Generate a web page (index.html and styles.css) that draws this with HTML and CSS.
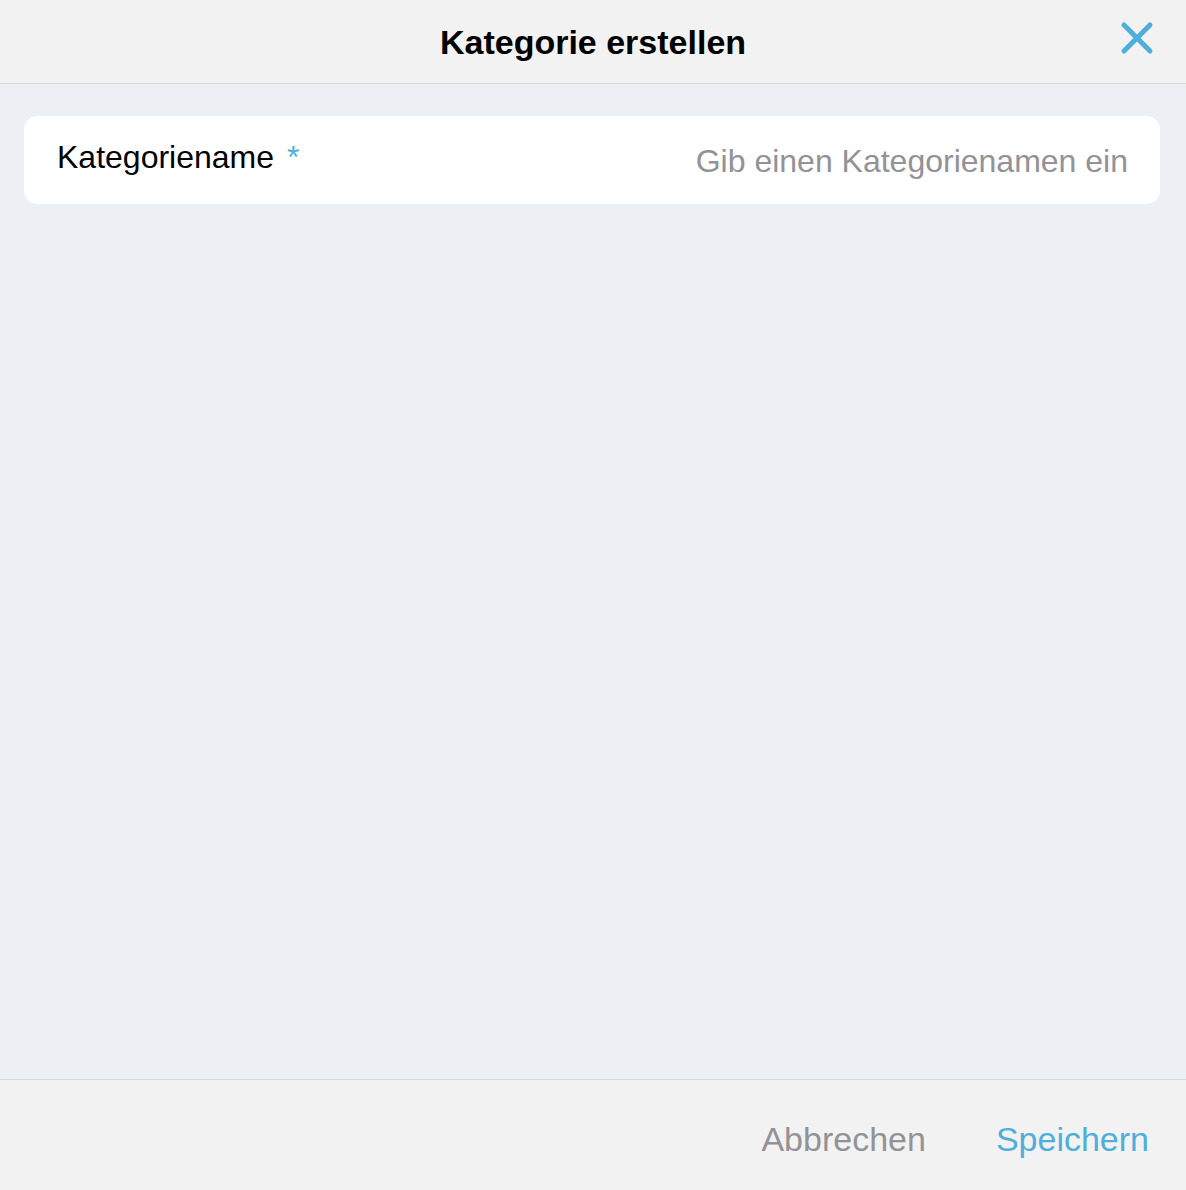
FILE: index.html
```html
<!DOCTYPE html>
<html lang="de">
<head>
<meta charset="utf-8">
<title>Kategorie erstellen</title>
<link rel="stylesheet" href="styles.css">
</head>
<body>
<div class="sheet">
  <header class="header">
    <h1 class="title">Kategorie erstellen</h1>
    <button class="close" aria-label="Schließen">
      <svg width="34" height="34" viewBox="0 0 34 34"><path d="M4 4 L30 30 M30 4 L4 30" stroke="#4fafdb" stroke-width="5" stroke-linecap="round" fill="none"/></svg>
    </button>
  </header>
  <main class="content">
    <div class="card">
      <label class="label">Kategoriename <span class="req">*</span></label>
      <span class="placeholder">Gib einen Kategorienamen ein</span>
    </div>
  </main>
  <footer class="footer">
    <button class="btn cancel">Abbrechen</button>
    <button class="btn save">Speichern</button>
  </footer>
</div>
</body>
</html>
```
FILE: styles.css
```css
html, body {
  margin: 0;
  padding: 0;
  height: 100%;
}
body {
  font-family: "Liberation Sans", Arial, sans-serif;
  background: #eceff3;
}
.sheet {
  display: flex;
  flex-direction: column;
  height: 1190px;
}
.header {
  position: relative;
  height: 83px;
  flex: none;
  background: #f2f2f2;
  border-bottom: 1px solid #d6d6d8;
  display: flex;
  align-items: center;
  justify-content: center;
}
.title {
  margin: 0;
  font-size: 34px;
  font-weight: bold;
  color: #000;
  padding-top: 1px;
}
.close {
  position: absolute;
  right: 32px;
  top: 21px;
  background: none;
  border: 0;
  padding: 0;
  width: 34px;
  height: 34px;
  display: block;
}
.close svg { display: block; }
.content {
  flex: 1;
  padding: 32px 26px 0 24px;
}
.card {
  background: #fff;
  border-radius: 14px;
  height: 88px;
  display: flex;
  align-items: center;
  justify-content: space-between;
  padding: 0 32px 0 33px;
  box-sizing: border-box;
}
.label {
  font-size: 32px;
  color: #000;
  margin-top: -6px;
}
.req {
  color: #4fafdb;
  margin-left: 4px;
}
.placeholder {
  font-size: 32px;
  color: #929297;
  margin-top: 2px;
}
.footer {
  flex: none;
  height: 111px;
  background: #f2f2f2;
  border-top: 1px solid #d6d6d8;
  display: flex;
  align-items: center;
  justify-content: flex-end;
  gap: 70px;
  padding: 8px 37px 0 0;
  box-sizing: border-box;
}
.btn {
  background: none;
  border: 0;
  padding: 0;
  font-family: "Liberation Sans", Arial, sans-serif;
  font-size: 34px;
}
.cancel { color: #929297; }
.save { color: #4fafdb; }
```
